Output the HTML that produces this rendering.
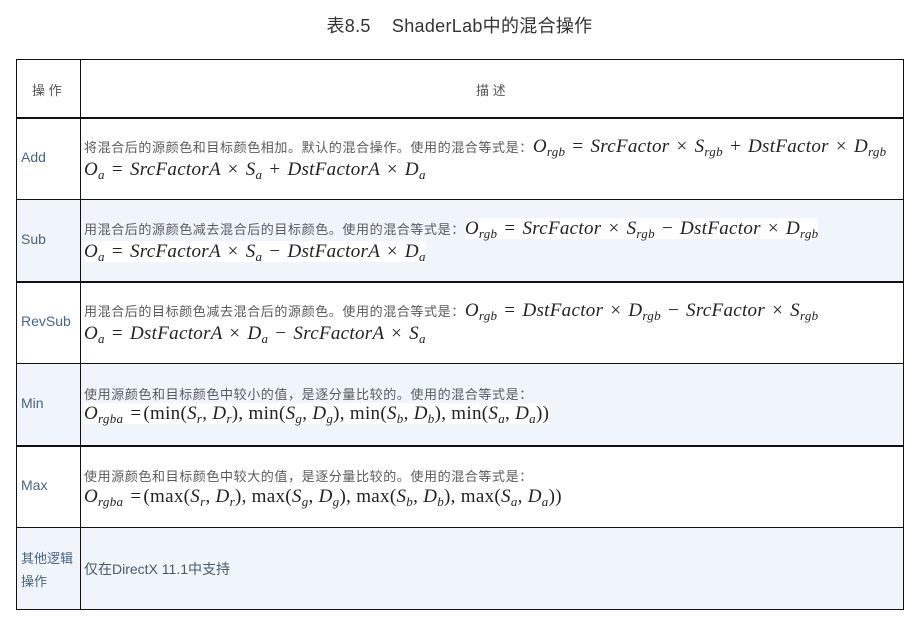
<!DOCTYPE html>
<html><head><meta charset="utf-8"><style>
*{margin:0;padding:0;box-sizing:border-box}
body{width:919px;height:622px;background:#fff;position:relative;overflow:hidden;font-family:"Liberation Sans","Noto Sans CJK SC",sans-serif}
.title{position:absolute;top:12px;left:0;width:919px;text-align:center;font-size:18px;color:#333;letter-spacing:0.3px}
.row{position:absolute;left:16px;width:888px;border:1.3px solid #111;}
.shade{background:#f0f5fc}
.vl{position:absolute;left:80px;top:59px;width:1.3px;height:551px;background:#111}
.lab{position:absolute;left:21px;font-size:14px;color:#4a6480}
.t{position:absolute;left:84px;font-size:13px;color:#5a5a5a;white-space:nowrap;letter-spacing:0.6px}
.m{font-family:"Liberation Serif",serif;font-style:italic;font-size:19px;color:#222;white-space:nowrap;letter-spacing:0.3px}
.m .u{font-style:normal;padding:0 2px}
.m sub{font-size:13px;vertical-align:-4px;line-height:0}
.w{background:#fff}
</style></head><body>
<div class="title">表8.5&nbsp;&nbsp;&nbsp; ShaderLab中的混合操作</div>
<div class="row" style="top:59px;height:60px"></div>
<div class="row" style="top:117px;height:84px"></div>
<div class="row shade" style="top:199px;height:84px"></div>
<div class="row" style="top:281px;height:84px"></div>
<div class="row shade" style="top:363px;height:84px"></div>
<div class="row" style="top:445px;height:84px"></div>
<div class="row shade" style="top:527px;height:83px"></div>
<div class="vl"></div>
<div class="lab" style="top:80px;left:32px;font-size:13px;color:#555">操 作</div>
<div class="lab" style="top:80px;left:476px;font-size:13px;color:#555">描 述</div>

<div class="lab" style="top:149px">Add</div>
<div class="t" style="top:136px">将混合后的源颜色和目标颜色相加。默认的混合操作。使用的混合等式是：<span class="m">O<sub>rgb</sub> <span class="u">=</span> SrcFactor <span class="u">×</span> S<sub>rgb</sub> <span class="u">+</span> DstFactor <span class="u">×</span> D<sub>rgb</sub></span></div>
<div class="t" style="top:159px"><span class="m">O<sub>a</sub> <span class="u">=</span> SrcFactorA <span class="u">×</span> S<sub>a</sub> <span class="u">+</span> DstFactorA <span class="u">×</span> D<sub>a</sub></span></div>

<div class="lab" style="top:231px">Sub</div>
<div class="t" style="top:218px">用混合后的源颜色减去混合后的目标颜色。使用的混合等式是：<span class="m w">O<sub>rgb</sub> <span class="u">=</span> SrcFactor <span class="u">×</span> S<sub>rgb</sub> <span class="u">−</span> DstFactor <span class="u">×</span> D<sub>rgb</sub></span></div>
<div class="t" style="top:241px"><span class="m w">O<sub>a</sub> <span class="u">=</span> SrcFactorA <span class="u">×</span> S<sub>a</sub> <span class="u">−</span> DstFactorA <span class="u">×</span> D<sub>a</sub></span></div>

<div class="lab" style="top:313px">RevSub</div>
<div class="t" style="top:300px">用混合后的目标颜色减去混合后的源颜色。使用的混合等式是：<span class="m">O<sub>rgb</sub> <span class="u">=</span> DstFactor <span class="u">×</span> D<sub>rgb</sub> <span class="u">−</span> SrcFactor <span class="u">×</span> S<sub>rgb</sub></span></div>
<div class="t" style="top:323px"><span class="m">O<sub>a</sub> <span class="u">=</span> DstFactorA <span class="u">×</span> D<sub>a</sub> <span class="u">−</span> SrcFactorA <span class="u">×</span> S<sub>a</sub></span></div>

<div class="lab" style="top:395px">Min</div>
<div class="t" style="top:384px">使用源颜色和目标颜色中较小的值，是逐分量比较的。使用的混合等式是：</div>
<div class="t" style="top:403px"><span class="m w">O<sub>rgba</sub> <span class="u">=</span><span class="u" style="padding:0">(min(</span>S<sub>r</sub><span class="u" style="padding:0">, </span>D<sub>r</sub><span class="u" style="padding:0">), min(</span>S<sub>g</sub><span class="u" style="padding:0">, </span>D<sub>g</sub><span class="u" style="padding:0">), min(</span>S<sub>b</sub><span class="u" style="padding:0">, </span>D<sub>b</sub><span class="u" style="padding:0">), min(</span>S<sub>a</sub><span class="u" style="padding:0">, </span>D<sub>a</sub><span class="u" style="padding:0">))</span></span></div>

<div class="lab" style="top:477px">Max</div>
<div class="t" style="top:466px">使用源颜色和目标颜色中较大的值，是逐分量比较的。使用的混合等式是：</div>
<div class="t" style="top:486px"><span class="m">O<sub>rgba</sub> <span class="u">=</span><span class="u" style="padding:0">(max(</span>S<sub>r</sub><span class="u" style="padding:0">, </span>D<sub>r</sub><span class="u" style="padding:0">), max(</span>S<sub>g</sub><span class="u" style="padding:0">, </span>D<sub>g</sub><span class="u" style="padding:0">), max(</span>S<sub>b</sub><span class="u" style="padding:0">, </span>D<sub>b</sub><span class="u" style="padding:0">), max(</span>S<sub>a</sub><span class="u" style="padding:0">, </span>D<sub>a</sub><span class="u" style="padding:0">))</span></span></div>

<div class="lab" style="top:547px;font-size:13px;line-height:23px;color:#4a6480">其他逻辑<br>操作</div>
<div class="t" style="top:559px;font-size:14px;color:#4a5a6a;letter-spacing:0">仅在DirectX 11.1中支持</div>
</body></html>
